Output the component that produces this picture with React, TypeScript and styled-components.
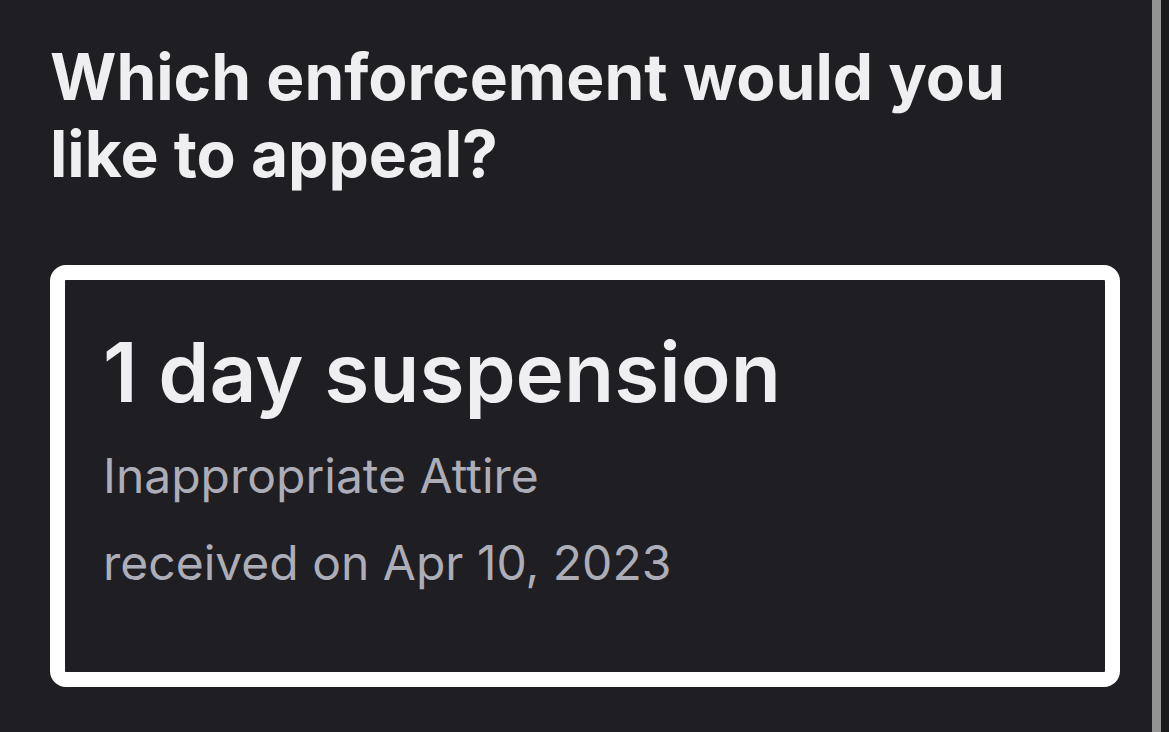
import React from "react";
import { styled, createGlobalStyle } from "styled-components";

const GlobalStyle = createGlobalStyle`
  html, body {
    margin: 0;
    padding: 0;
    background: #1f1f23;
  }
  body {
    font-family: Inter, "Noto Sans", sans-serif;
    -webkit-font-smoothing: antialiased;
  }
`;

interface Enforcement {
  title: string;
  reason: string;
  received: string;
}

const enforcements: Enforcement[] = [
  { title: "1 day suspension", reason: "Inappropriate Attire", received: "received on Apr 10, 2023" },
];

function App() {
  return (
    <Page>
      <GlobalStyle />
      <Main>
        <Heading>Which enforcement would you like to appeal?</Heading>
        {enforcements.map((item) => (
          <Card key={item.title} type="button">
            <CardTitle>{item.title}</CardTitle>
            <CardMeta>{item.reason}</CardMeta>
            <CardMeta>{item.received}</CardMeta>
          </Card>
        ))}
      </Main>
      <Scrollbar>
        <Thumb />
      </Scrollbar>
    </Page>
  );
}

const Page = styled.div`
  display: flex;
  height: 732px;
  overflow: hidden;
  background: #1f1f23;
`;

const Main = styled.div`
  flex: 1;
  padding: 38px 32px 0 50px;
  display: flex;
  flex-direction: column;
  align-items: stretch;
`;

const Heading = styled.h1`
  margin: 0 0 73px;
  font-family: Inter, sans-serif;
  font-weight: 700;
  font-size: 64px;
  line-height: 77px;
  letter-spacing: 0;
  color: #efeff1;
  max-width: 980px;
`;

const Card = styled.button`
  display: flex;
  flex-direction: column;
  align-items: flex-start;
  text-align: left;
  margin: 0;
  padding: 48px 38px 66px;
  background: #1f1f23;
  border: 15px solid #ffffff;
  border-radius: 16px;
  cursor: pointer;
  font-family: Inter, sans-serif;
`;

const CardTitle = styled.div`
  font-size: 82px;
  font-weight: 600;
  line-height: 90px;
  letter-spacing: 0;
  color: #efeff1;
  margin-bottom: 14px;
`;

const CardMeta = styled.div`
  font-size: 48px;
  font-weight: 400;
  line-height: 87px;
  color: #adadb8;
`;

const Scrollbar = styled.div`
  width: 17px;
  flex-shrink: 0;
  display: flex;
  background: #1a1a1d;
`;

const Thumb = styled.div`
  width: 9px;
  background: #939393;
`;

export default App;
